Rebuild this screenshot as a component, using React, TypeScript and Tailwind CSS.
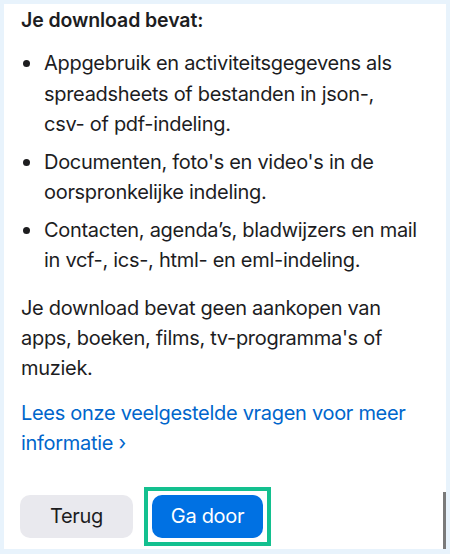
const bullets = [
  <>
    Appgebruik en activiteitsgegevens als spreadsheets of bestanden in json-,
    <br />
    csv- of pdf-indeling.
  </>,
  <>Documenten, foto's en video's in de oorspronkelijke indeling.</>,
  <>Contacten, agenda’s, bladwijzers en mail in vcf-, ics-, html- en eml-indeling.</>,
]

export default function App() {
  return (
    <div
      className="w-[450px] h-[554px] bg-[#e8f3fc] pt-[4px] pl-[4px] pr-[4px] pb-[5px]"
      style={{ fontFamily: 'Inter, "Noto Sans", sans-serif' }}
    >
      <div className="relative h-full bg-white overflow-hidden pl-[17px] pr-[20px] pt-[4px] text-[#1d1d1f] tracking-[-0.3px]">
        <h2 className="text-[19.5px] font-semibold leading-[24px] tracking-[-0.1px]">Je download bevat:</h2>

        <ul className="mt-[16px] flex flex-col gap-[7px]">
          {bullets.map((b, i) => (
            <li key={i} className="flex text-[20px] leading-[30.5px]">
              <span className="w-[23px] shrink-0 flex items-start pt-[12px] pl-[2px]">
                <span className="block w-[7px] h-[7px] rounded-full bg-[#1d1d1f]" />
              </span>
              <span>{b}</span>
            </li>
          ))}
        </ul>

        <p className="mt-[17px] text-[20px] leading-[30px]">
          Je download bevat geen aankopen van apps, boeken, films, tv-programma's of muziek.
        </p>

        <p className="mt-[15px] text-[20px] leading-[30px] text-[#0066cc]">
          Lees onze veelgestelde vragen voor meer informatie ›
        </p>

        <div className="mt-[37px] flex items-center gap-[19px]">
          <button className="w-[113px] h-[43px] rounded-[10px] bg-[#e9e9ee] text-[20px] text-[#1d1d1f] -ml-[1px]">
            Terug
          </button>
          <div className="p-[4px] border-[4px] border-[#13c08f] -m-[8px]">
            <button className="w-[111px] h-[43px] rounded-[10px] bg-[#0071e3] text-[20px] text-white block">
              Ga door
            </button>
          </div>
        </div>

        <div className="absolute right-0 bottom-0 w-[3px] h-[57px] bg-[#7a7a7a]" />
      </div>
    </div>
  )
}
